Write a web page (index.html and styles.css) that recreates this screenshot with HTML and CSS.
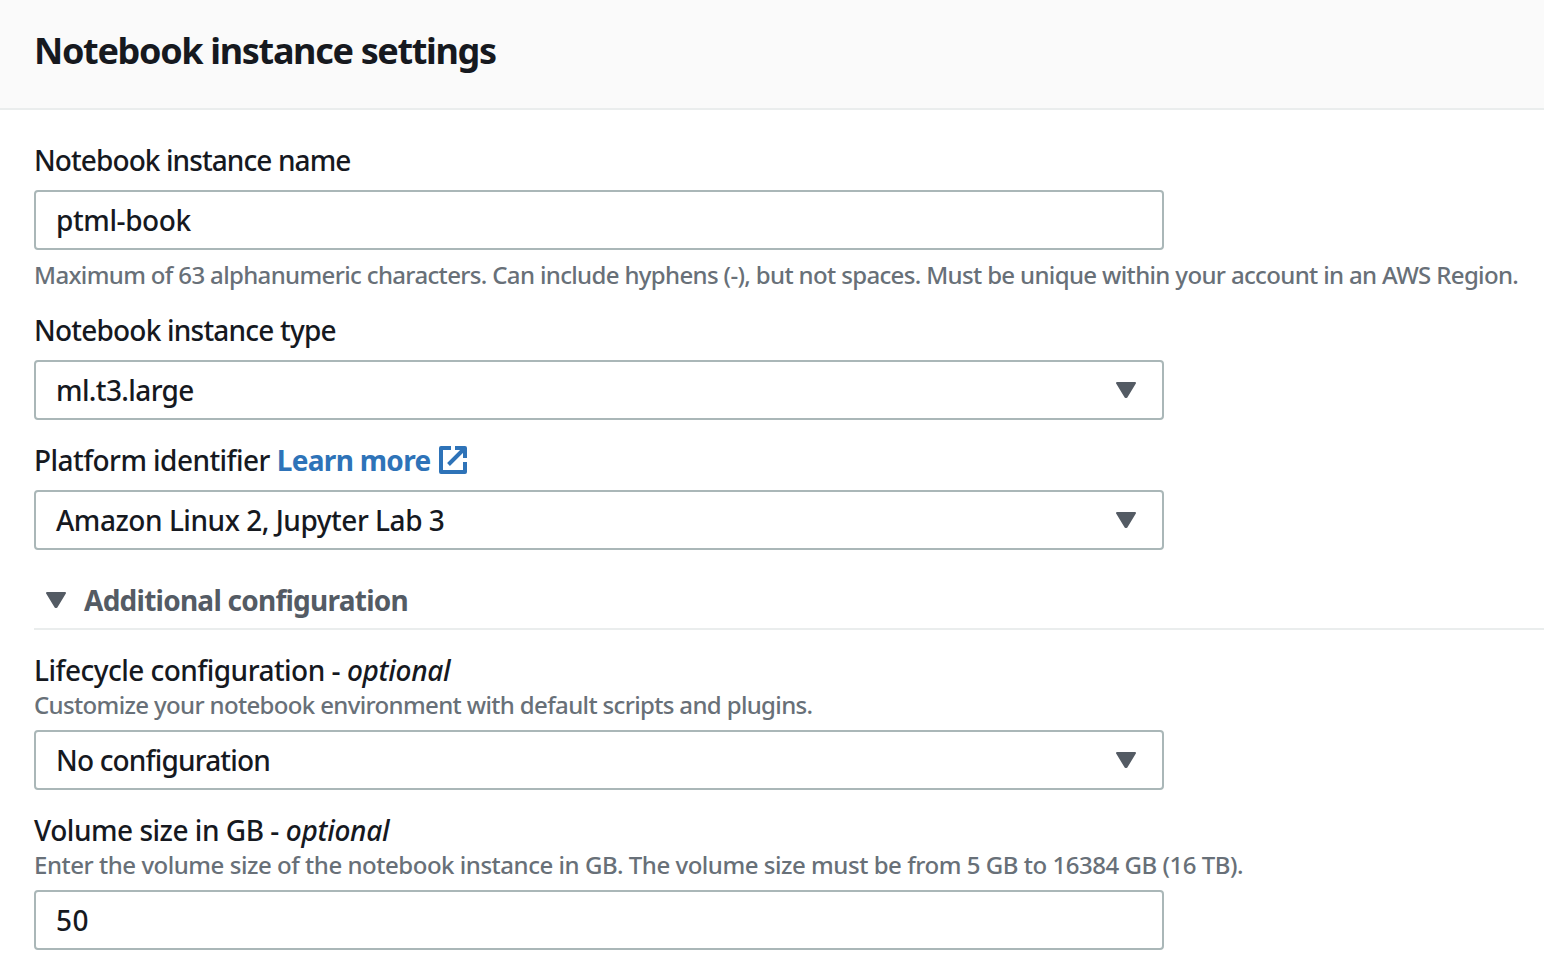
FILE: index.html
```html
<!DOCTYPE html>
<html lang="en">
<head>
<meta charset="utf-8">
<title>Notebook instance settings</title>
<link rel="stylesheet" href="styles.css">
</head>
<body>
<header class="panel-header"><h2 class="panel-title"><span class="t-title">Notebook instance settings</span></h2></header>
<main class="panel-body">
  <section class="field">
    <div class="label"><span class="t-name">Notebook instance name</span></div>
    <div class="control"><span class="t-ptml">ptml-book</span></div>
    <div class="hint hint-below"><span class="t-max">Maximum of 63 alphanumeric characters. Can include hyphens (-), but not spaces. Must be unique within your account in an AWS Region.</span></div>
  </section>
  <section class="field">
    <div class="label"><span class="t-type">Notebook instance type</span></div>
    <div class="control"><span class="t-large">ml.t3.large</span><svg class="caret" viewBox="0 0 20 16"><path d="M1 1h18L10.500 15h-1z"/></svg></div>
  </section>
  <section class="field">
    <div class="label"><span class="t-platform">Platform identifier</span><a class="link"><span class="t-learn">Learn more</span><svg class="external" viewBox="0 0 28 28"><path d="M12 2H2v24h24V16M16 2h10v10M25 3L9.500 18.500"/></svg></a></div>
    <div class="control"><span class="t-amazon">Amazon Linux 2, Jupyter Lab 3</span><svg class="caret" viewBox="0 0 20 16"><path d="M1 1h18L10.500 15h-1z"/></svg></div>
  </section>
  <div class="expander"><svg class="caret" viewBox="0 0 20 16"><path d="M1 1h18L10.500 15h-1z"/></svg><span class="t-additional">Additional configuration</span></div>
  <section class="field">
    <div class="label"><span class="t-lifecycle">Lifecycle configuration -</span><em class="t-optional">optional</em></div>
    <div class="hint"><span class="t-custom">Customize your notebook environment with default scripts and plugins.</span></div>
    <div class="control"><span class="t-noconf">No configuration</span><svg class="caret" viewBox="0 0 20 16"><path d="M1 1h18L10.500 15h-1z"/></svg></div>
  </section>
  <section class="field">
    <div class="label"><span class="t-volume">Volume size in GB -</span><em class="t-optional">optional</em></div>
    <div class="hint"><span class="t-enter">Enter the volume size of the notebook instance in GB. The volume size must be from 5 GB to 16384 GB (16 TB).</span></div>
    <div class="control"><span class="t-fifty">50</span></div>
  </section>
</main>
</body>
</html>
```
FILE: styles.css
```css
* { box-sizing: border-box; }
body { margin: 0; background: #fff; color: #16191f; font: 500 28px/40px "Noto Sans", sans-serif; overflow: hidden; white-space: nowrap; }
.panel-header { height: 110px; padding: 26px 34px 0; background: #fafafa; border-bottom: 2px solid #eaeded; }
.panel-title { margin: 0; font-size: 36px; line-height: 49px; font-weight: 700; }
.panel-body { display: flex; flex-direction: column; gap: 20px; padding: 30px 0 0 34px; }
.field { width: 1130px; }
.label { display: flex; height: 40px; gap: 7px; }
.hint { height: 30px; font-size: 24px; line-height: 30px; color: #687078; }
.control { display: flex; align-items: center; justify-content: space-between; height: 60px; margin-top: 10px; padding: 0 26px 0 20px; border: 2px solid #aab7b8; border-radius: 4px; }
.hint-below { margin-top: 10px; }
.caret { width: 20px; height: 16px; flex: none; fill: #545b64; stroke: #545b64; stroke-width: 2; stroke-linejoin: round; }
.link { display: flex; align-items: center; gap: 9px; color: #2e73b8; font-weight: 700; }
.external { width: 28px; height: 28px; flex: none; fill: none; stroke: #2e73b8; stroke-width: 4; stroke-linejoin: round; }
.expander { display: flex; align-items: center; gap: 18px; height: 50px; margin-top: 10px; padding: 0 0 8px 12px; border-bottom: 2px solid #eaeded; color: #545b64; font-weight: 700; }

/* Tracking per text run */
.t-title { letter-spacing: -1.33px; }
.t-name { letter-spacing: -0.91px; }
.t-ptml { letter-spacing: -0.4px; }
.t-max { letter-spacing: -0.65px; }
.t-type { letter-spacing: -0.79px; }
.t-large { letter-spacing: -0.62px; }
.t-platform { letter-spacing: -0.56px; }
.t-learn { letter-spacing: -0.7px; }
.t-amazon { letter-spacing: -0.47px; }
.t-additional { letter-spacing: -0.75px; }
.t-lifecycle { letter-spacing: -0.53px; }
.t-optional { letter-spacing: -0.3px; }
.t-custom { letter-spacing: -0.65px; }
.t-noconf { letter-spacing: -0.83px; }
.t-volume { letter-spacing: -0.48px; }
.t-enter { letter-spacing: -0.465px; }
.t-fifty { letter-spacing: 0.5px; }
```
